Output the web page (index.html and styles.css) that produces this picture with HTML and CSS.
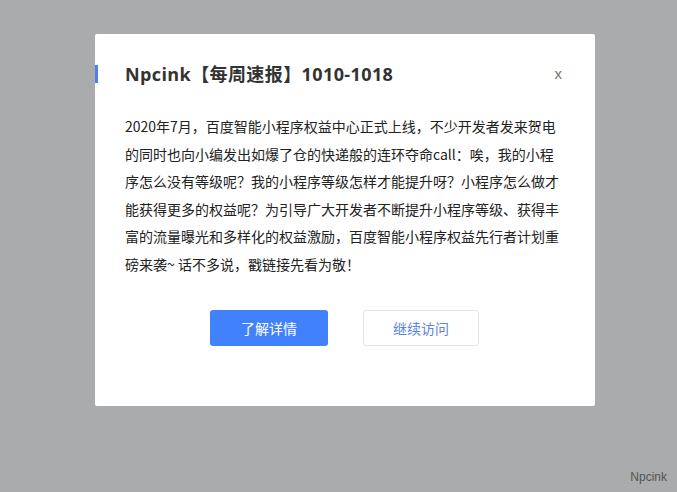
FILE: index.html
```html
<!DOCTYPE html>
<html lang="zh-CN">
<head>
<meta charset="utf-8">
<title>Npcink</title>
<link rel="stylesheet" href="styles.css">
</head>
<body>
<div class="page">
  <div class="modal">
    <div class="modal-header">
      <h2 class="modal-title">Npcink【每周速报】1010-1018</h2>
      <span class="modal-close">x</span>
    </div>
    <p class="modal-body">2020年7月，百度智能小程序权益中心正式上线，不少开发者发来贺电的同时也向小编发出如爆了仓的快递般的连环夺命call：唉，我的小程序怎么没有等级呢？我的小程序等级怎样才能提升呀？小程序怎么做才能获得更多的权益呢？为引导广大开发者不断提升小程序等级、获得丰富的流量曝光和多样化的权益激励，百度智能小程序权益先行者计划重磅来袭~ 话不多说，戳链接先看为敬！</p>
    <div class="modal-actions">
      <a class="btn btn-primary">了解详情</a>
      <a class="btn btn-default">继续访问</a>
    </div>
  </div>
  <div class="watermark">Npcink</div>
</div>
</body>
</html>
```

FILE: styles.css
```css
html, body {
  margin: 0;
  padding: 0;
}
body {
  background: #aaabac;
  font-family: "Noto Sans CJK SC", "Noto Sans", sans-serif;
}
.page {
  display: flex;
  flex-direction: column;
  min-height: 492px;
  box-sizing: border-box;
}
.modal {
  width: 500px;
  height: 372px;
  margin: 34px 0 0 95px;
  background: #ffffff;
  border-radius: 2px;
  box-sizing: border-box;
  display: flex;
  flex-direction: column;
}
.modal-header {
  display: flex;
  align-items: center;
  justify-content: space-between;
  padding: 31px 33px 0 30px;
}
.modal-title {
  margin: 0 0 0 -30px;
  padding-left: 27px;
  border-left: 3px solid #4a80f0;
  font-family: "Open Sans", "Noto Sans CJK SC", sans-serif;
  font-size: 18px;
  line-height: 18px;
  font-weight: 700;
  letter-spacing: 0.4px;
  color: #333333;
}
.modal-close {
  font-family: "Liberation Sans", sans-serif;
  font-size: 15px;
  line-height: 18px;
  color: #777777;
}
.modal-body {
  margin: 30px 0 0 0;
  padding: 0 30px;
  font-size: 14px;
  line-height: 27.6px;
  color: #222222;
}
.modal-actions {
  display: flex;
  justify-content: center;
  gap: 35px;
  margin-top: 31px;
  padding-right: 1px;
}
.btn {
  display: flex;
  align-items: center;
  justify-content: center;
  width: 117px;
  height: 36px;
  box-sizing: border-box;
  border-radius: 3px;
  font-size: 14px;
}
.btn-primary {
  width: 118px;
  background: #4181fc;
  color: #ffffff;
}
.btn-default {
  width: 116px;
  border: 1px solid #e3e5ea;
  background: #ffffff;
  color: #5b84dc;
}
.watermark {
  margin-top: auto;
  align-self: flex-end;
  padding: 0 10px 7px 0;
  font-family: "Liberation Sans", sans-serif;
  font-size: 12px;
  line-height: 16px;
  color: #555555;
}
```
